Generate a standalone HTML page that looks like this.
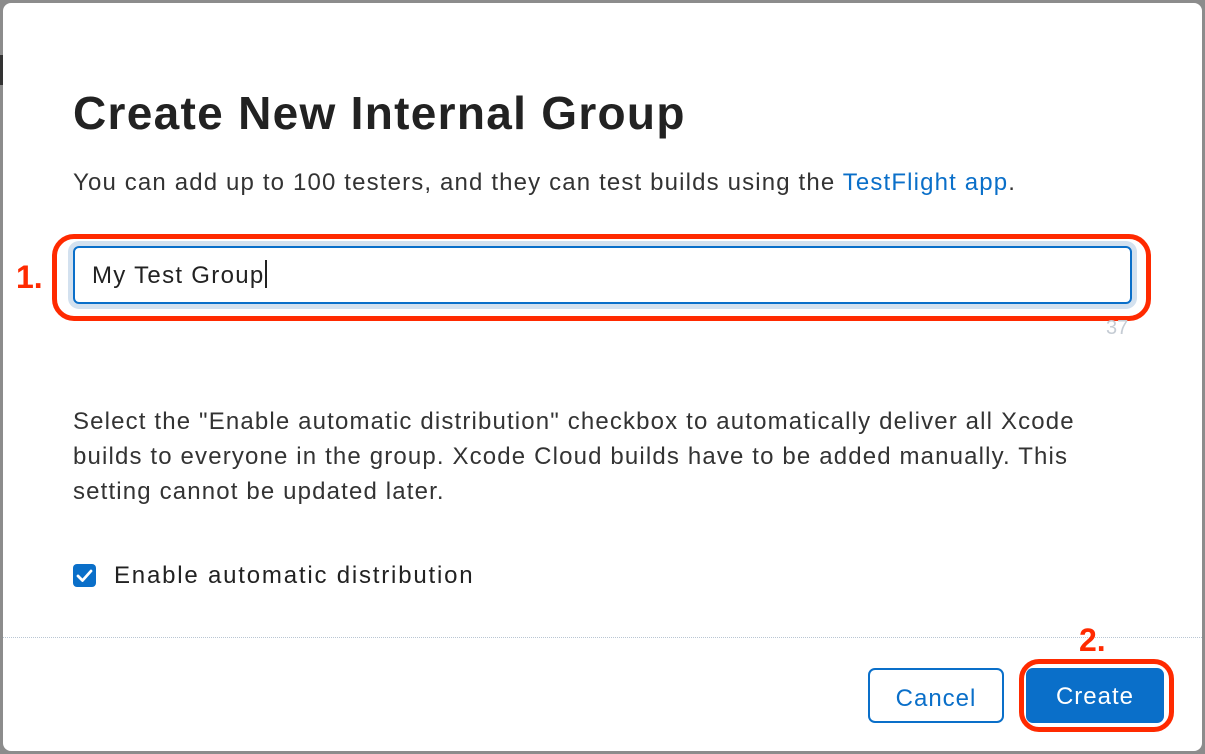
<!DOCTYPE html>
<html><head><meta charset="utf-8"><style>
html,body{margin:0;padding:0}
body{width:1205px;height:754px;background:#8c8c8c;position:relative;overflow:hidden;font-family:"Liberation Sans",sans-serif;}
.modal{position:absolute;left:3px;top:3px;width:1199px;height:748px;background:#fff;border-radius:8px;}
.abs{position:absolute;white-space:nowrap}
h1{position:absolute;left:73px;top:86px;margin:0;font-size:46px;font-weight:bold;color:#222;letter-spacing:1.3px;white-space:nowrap}
.p{color:#333;font-size:24px;line-height:35px;letter-spacing:1.15px}
a{color:#0a6fc9;text-decoration:none}
.input{position:absolute;left:73px;top:246px;width:1059px;height:58px;box-sizing:border-box;border:2px solid #0a6fc9;border-radius:6px;box-shadow:0 0 0 5px #d3e1ef;font-size:24px;letter-spacing:1.3px;color:#222;padding-left:17px;line-height:56px}
.red{border:5px solid #ff2a00;border-radius:22px;position:absolute;box-sizing:border-box}
.num{color:#ff2a00;font-weight:bold;font-size:32px;position:absolute}
.btn{position:absolute;top:668px;height:55px;box-sizing:border-box;border-radius:7px;font-size:24px;letter-spacing:1px;text-align:center;line-height:58px}
</style></head><body>
<div class="abs" style="left:0;top:55px;width:4px;height:30px;background:#333"></div>
<div class="modal"></div>
<h1>Create New Internal Group</h1>
<div class="abs p" style="left:73px;top:165px">You can add up to 100 testers, and they can test builds using the <a>TestFlight app</a>.</div>
<div class="red" style="left:52px;top:234px;width:1099px;height:87px"></div>
<div class="input">My Test Group<span style="display:inline-block;width:2px;height:28px;background:#222;vertical-align:-5px"></span></div>
<div class="num" style="left:16px;top:259px">1.</div>
<div class="abs" style="left:1106px;top:317px;font-size:20px;color:#c5ccd4">37</div>
<div class="abs p" style="left:73px;top:404px">Select the "Enable automatic distribution" checkbox to automatically deliver all Xcode<br>builds to everyone in the group. Xcode Cloud builds have to be added manually. This<br>setting cannot be updated later.</div>
<div class="abs" style="left:73px;top:564px;width:23px;height:23px;background:#0a6fc9;border-radius:4px">
<svg width="23" height="23" viewBox="0 0 23 23"><path d="M5 12l4.5 4.5L18 7" stroke="#fff" stroke-width="2.8" fill="none" stroke-linecap="round" stroke-linejoin="round"/></svg></div>
<div class="abs" style="left:114px;top:562px;font-size:24px;letter-spacing:1.8px;color:#222">Enable automatic distribution</div>
<div class="abs" style="left:3px;top:637px;width:1199px;border-top:1px dotted #b9c6d3"></div>
<div class="btn" style="left:868px;width:136px;border:2px solid #0a6fc9;color:#0a6fc9;background:#fff">Cancel</div>
<div class="red" style="left:1019px;top:659px;width:155px;height:73px;border-radius:20px"></div>
<div class="btn" style="left:1026px;width:138px;background:#0a6fc9;color:#fff">Create</div>
<div class="num" style="left:1079px;top:622px">2.</div>
</body></html>
